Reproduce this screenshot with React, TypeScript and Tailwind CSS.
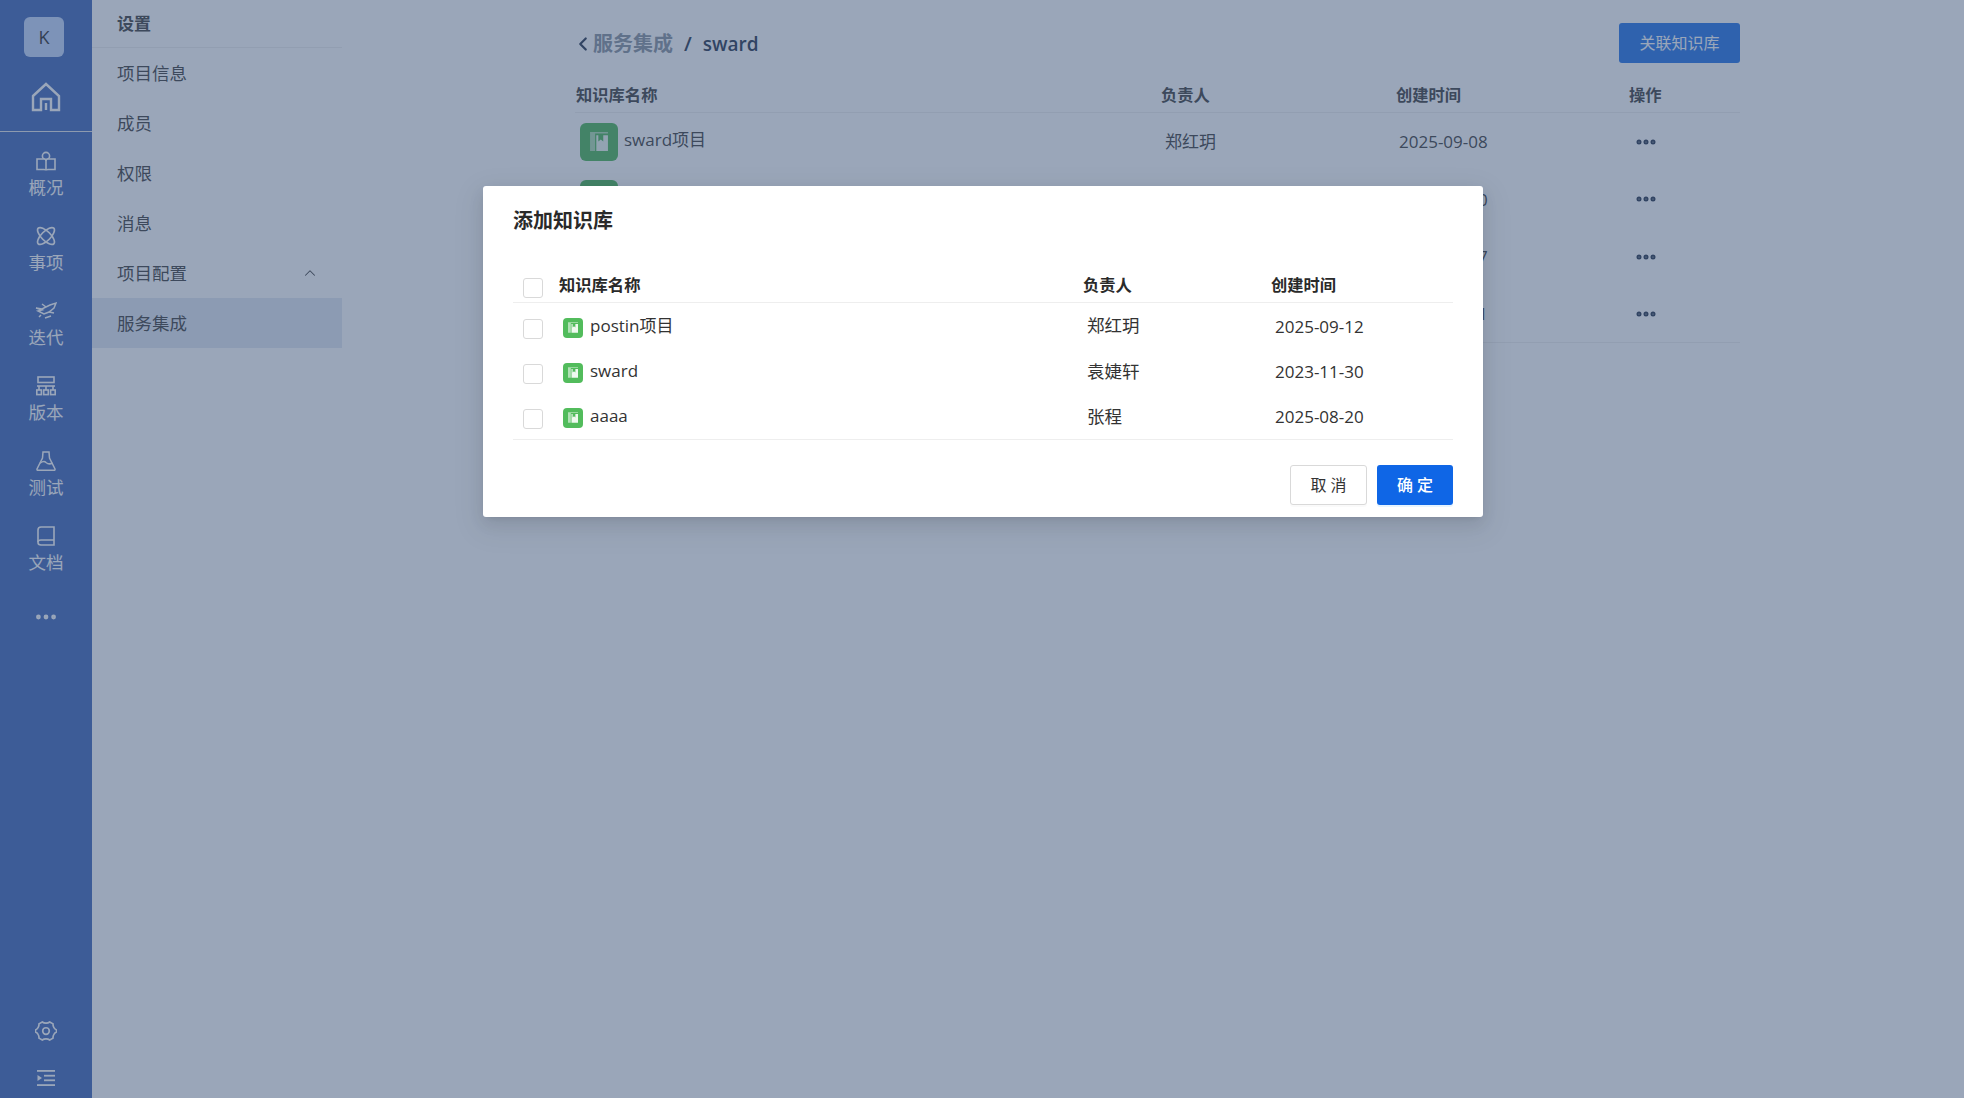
import React from "react";
import { ChevronLeft, ChevronUp, Ellipsis } from "lucide-react";

const FONT = "font-['Open_Sans','Noto_Sans_CJK_SC',sans-serif]";

const menuItems = ["项目信息", "成员", "权限", "消息"];

const HomeIcon = () => (
  <svg viewBox="0 0 30 30" className="h-[30px] w-[30px]" fill="none" stroke="currentColor" strokeWidth="2.4">
    <path d="M2 14 L15 2 L28 14 V28 H20 V17 H10 V28 H2 Z" />
    <path d="M15 21 V28" />
  </svg>
);

const OverviewIcon = () => (
  <svg viewBox="0 0 20 20" className="h-5 w-5" fill="none" stroke="currentColor" strokeWidth="1.6">
    <circle cx="10" cy="5" r="3.6" />
    <path d="M1 8 H8 Q10 8 10 10 Q10 8 12 8 H19 V18.5 H12 Q10 18.5 10 19.5 Q10 18.5 8 18.5 H1 Z" fill="#456bbb" />
    <path d="M10 10 V19" />
  </svg>
);

const WorkItemIcon = () => (
  <svg viewBox="0 0 20 20" className="h-5 w-5" fill="none" stroke="currentColor" strokeWidth="1.7">
    <ellipse cx="10" cy="10" rx="11" ry="4.6" transform="rotate(45 10 10)" />
    <ellipse cx="10" cy="10" rx="11" ry="4.6" transform="rotate(-45 10 10)" />
  </svg>
);

const SprintIcon = () => (
  <svg viewBox="0 0 22 20" className="h-5 w-[22px]" fill="none" stroke="currentColor" strokeWidth="1.5">
    <path d="M1 7 L7 8 L15 4 L21 2 L19 7 L14 11 L9 13 L3 10 L7 9 Z" />
    <path d="M11 6 L7 3 M14 11 L19 12 M10 17 L16 15 M6 14 L4 16" />
  </svg>
);

const VersionIcon = () => (
  <svg viewBox="0 0 20 20" className="h-5 w-5" fill="none" stroke="currentColor" strokeWidth="1.6">
    <rect x="2" y="1" width="16" height="5.5" />
    <path d="M1 10 H19" />
    <rect x="0.8" y="14" width="4.6" height="4.6" />
    <rect x="7.7" y="14" width="4.6" height="4.6" />
    <rect x="14.6" y="14" width="4.6" height="4.6" />
    <path d="M3 10 V14 M10 10 V14 M17 10 V14" />
  </svg>
);

const TestIcon = () => (
  <svg viewBox="0 0 20 20" className="h-5 w-5" fill="none" stroke="currentColor" strokeWidth="1.5">
    <path d="M7 1 H13 L13.5 7 L19 18 Q19.3 19.2 18 19.2 H2 Q0.7 19.2 1 18 L6.5 7 Z" />
    <path d="M4 12 Q8 9.5 10 11.5 Q13 14 16.5 12" />
  </svg>
);

const DocIcon = () => (
  <svg viewBox="0 0 20 20" className="h-5 w-5" fill="none" stroke="currentColor" strokeWidth="1.6">
    <path d="M18 1 H5 Q2 1 2 4 V16.5 Q2 19 5 19 H18 Z" />
    <path d="M2 16 Q2 14 5 14 H18" />
  </svg>
);

const GearIcon = () => (
  <svg viewBox="0 0 20 20" className="h-[22px] w-[22px]" fill="none" stroke="currentColor" strokeWidth="1.5">
    <path d="M6.6 1.8 Q8 2.9 10 2.9 Q12 2.9 13.4 1.8 L16.4 3.5 Q16.2 5.4 17.2 6.9 Q18.1 8.4 19.5 9 V11 Q18.1 11.6 17.2 13.1 Q16.2 14.6 16.4 16.5 L13.4 18.2 Q12 17.1 10 17.1 Q8 17.1 6.6 18.2 L3.6 16.5 Q3.8 14.6 2.8 13.1 Q1.9 11.6 0.5 11 V9 Q1.9 8.4 2.8 6.9 Q3.8 5.4 3.6 3.5 Z" />
    <circle cx="10" cy="10" r="3" />
  </svg>
);

const CollapseIcon = () => (
  <svg viewBox="0 0 18 16" className="h-4 w-[18px]" fill="currentColor">
    <rect x="0" y="0" width="18" height="1.8" />
    <rect x="7" y="4.8" width="11" height="1.8" />
    <rect x="7" y="9.4" width="11" height="1.8" />
    <rect x="0" y="14.2" width="18" height="1.8" />
    <path d="M0.5 5 L5 8 L0.5 11 Z" />
  </svg>
);

// green rounded square with a bookmarked book inside
const RepoIcon = ({ size }: { size: "sm" | "lg" }) => (
  <span
    className={
      size === "lg"
        ? "flex h-[38px] w-[38px] shrink-0 items-center justify-center rounded-[6px] bg-[#50b85b]"
        : "flex h-5 w-5 shrink-0 translate-y-[2px] items-center justify-center rounded-[4px] bg-[#52bc5c]"
    }
  >
    <svg viewBox="0 0 16 17" className={size === "lg" ? "h-[19px] w-[18px]" : "h-[11px] w-[10px]"}>
      <path d="M0 0 H16 V1.4 H4.5 V17 H0 Z" fill="#ffffff" fillOpacity="0.55" />
      <path d="M5.6 2.8 H7.4 V8.6 L9.6 6.6 L11.8 8.6 V2.8 H16 V17 H5.6 Z" fill="#ffffff" fillOpacity="0.9" />
    </svg>
  </span>
);

const railItems = [
  { label: "概况", icon: <OverviewIcon /> },
  { label: "事项", icon: <WorkItemIcon /> },
  { label: "迭代", icon: <SprintIcon /> },
  { label: "版本", icon: <VersionIcon /> },
  { label: "测试", icon: <TestIcon /> },
  { label: "文档", icon: <DocIcon /> },
];

const Rail = () => (
  <aside className="flex h-full w-[92px] shrink-0 flex-col bg-[#456bbb] text-white">
    <div className="flex h-[132px] flex-col items-center border-b border-[#e5e7eb] pt-[17px] pr-[4px]">
      <div className="flex h-10 w-10 items-center justify-center rounded-[6px] bg-[#c5d9fd] text-lg text-[#333333]">
        K
      </div>
      <div className="mt-[25px] ml-[4px]">
        <HomeIcon />
      </div>
    </div>
    <div className="flex flex-col items-center pt-[18px]">
      {railItems.map((item) => (
        <div key={item.label} className="flex h-[75px] flex-col items-center">
          <div className="flex h-[22px] items-center">{item.icon}</div>
          <span className="mt-[2px] text-[17.5px] leading-[26px]">{item.label}</span>
        </div>
      ))}
      <Ellipsis className="mt-[4px] h-[26px] w-[26px]" strokeWidth={2.4} />
    </div>
    <div className="mt-auto flex flex-col items-center pb-[12px]">
      <GearIcon />
      <div className="mt-[28px]">
        <CollapseIcon />
      </div>
    </div>
  </aside>
);

const SettingsNav = () => (
  <nav className="h-full w-[250px] shrink-0 text-[17.5px] text-[#444444]">
    <div className="flex h-[48px] items-center border-b border-[#eeeeee] pl-[25px] text-[17px] font-semibold">设置</div>
    {menuItems.map((name) => (
      <div key={name} className="flex h-[50px] items-center pl-[25px]">
        {name}
      </div>
    ))}
    <div className="flex h-[50px] items-center justify-between pr-[23px] pl-[25px]">
      项目配置
      <ChevronUp className="h-[18px] w-[18px]" strokeWidth={1.4} />
    </div>
    <div className="flex h-[50px] items-center bg-[#e3e9f3] pl-[25px]">服务集成</div>
  </nav>
);

const PageContent = () => (
  <main className="min-w-0 flex-1 pt-[23px] pl-[233px]">
    <div className="w-[1165px]">
      <div className="flex h-10 items-center justify-between">
        <div className="flex items-center pt-[2px] text-[20px] font-semibold text-[#2c3a52]">
          <ChevronLeft className="-ml-[3px] h-[22px] w-[22px]" strokeWidth={2.4} />
          <span className="-ml-[1px] text-[#8b94a1]">服务集成</span>
          <span className="mx-[11px]">/</span>
          <span className="text-[19px]">sward</span>
        </div>
        <button className="h-10 w-[121px] rounded-[3px] bg-[#2977e9] text-[16px] text-white">关联知识库</button>
      </div>
      <div className="flex h-[50px] items-end border-b border-[#eeeeee] pb-[5px] pl-[1px] text-[16.3px] font-semibold text-[#444444]">
        <span className="w-[585px]">知识库名称</span>
        <span className="w-[235px]">负责人</span>
        <span className="w-[233px]">创建时间</span>
        <span>操作</span>
      </div>
      {[
        { name: "sward项目", owner: "郑红玥", date: "2025-09-08" },
        { name: "", owner: "", date: "2025-08-20" },
        { name: "", owner: "", date: "2025-08-27" },
        { name: "", owner: "", date: "2025-08-21" },
      ].map((row) => (
        <div key={row.date} className="flex h-[57.6px] items-center text-[17px] text-[#444444] last:border-b last:border-[#eeeeee]">
          <div className="flex w-[590px] items-center pl-[5px]">
            <RepoIcon size="lg" />
            <span className="ml-[6px] -translate-y-[2px]">{row.name}</span>
          </div>
          <span className="w-[234px]">{row.owner}</span>
          <span className="w-[228px]">{row.date}</span>
          <Ellipsis className="ml-[7px] h-[24px] w-[24px] text-[#2c3a52]" strokeWidth={3} />
        </div>
      ))}
    </div>
  </main>
);

const CheckBox = () => (
  <span className="block h-5 w-5 shrink-0 translate-y-[3px] rounded-[3px] border border-[#d9d9d9] bg-white" />
);

const dialogRows = [
  { name: "postin项目", owner: "郑红玥", date: "2025-09-12" },
  { name: "sward", owner: "袁婕轩", date: "2023-11-30" },
  { name: "aaaa", owner: "张程", date: "2025-08-20" },
];

const AddDialog = () => (
  <div className="absolute inset-0 flex items-start justify-center bg-[#354d73]/50 pt-[186px] pl-[2px]">
    <div className="h-[331px] w-[1000px] rounded-[3px] bg-white px-[30px] pt-[21px] shadow-[0_6px_16px_rgba(0,0,0,0.08),0_3px_6px_-4px_rgba(0,0,0,0.12),0_9px_28px_8px_rgba(0,0,0,0.05)]">
      <h2 className="text-[20px] leading-[28px] font-semibold text-[#2a2a2a]">添加知识库</h2>
      <div className="mt-[33px] flex h-[35px] items-center border-b border-[#eeeeee] pl-[10px] text-[16.3px] font-semibold text-[#2a2a2a]">
        <CheckBox />
        <span className="ml-[16px] w-[524px]">知识库名称</span>
        <span className="w-[188px]">负责人</span>
        <span>创建时间</span>
      </div>
      <div className="border-b border-[#eeeeee]">
        {dialogRows.map((row) => (
          <div key={row.name} className="flex h-[45.2px] items-center pl-[10px] text-[17px] text-[#333333]">
            <CheckBox />
            <div className="ml-[20px] flex w-[524px] items-center">
              <RepoIcon size="sm" />
              <span className="ml-[7px]">{row.name}</span>
            </div>
            <span className="w-[188px] text-[17.5px]">{row.owner}</span>
            <span className="translate-y-[1px]">{row.date}</span>
          </div>
        ))}
      </div>
      <div className="mt-[25px] flex justify-end gap-[10px]">
        <button className="h-10 w-[77px] rounded-[3px] border border-[#d9d9d9] bg-white text-[16px] text-[#333333] shadow-[0_2px_0_rgba(0,0,0,0.02)]">
          取 消
        </button>
        <button className="h-10 w-[76px] rounded-[3px] bg-[#0f66e6] text-[16px] font-medium text-white shadow-[0_2px_0_rgba(5,145,255,0.1)]">
          确 定
        </button>
      </div>
    </div>
  </div>
);

export default function App() {
  return (
    <div className={`relative flex h-[1098px] w-[1964px] overflow-hidden bg-white ${FONT}`}>
      <Rail />
      <SettingsNav />
      <PageContent />
      <AddDialog />
    </div>
  );
}
